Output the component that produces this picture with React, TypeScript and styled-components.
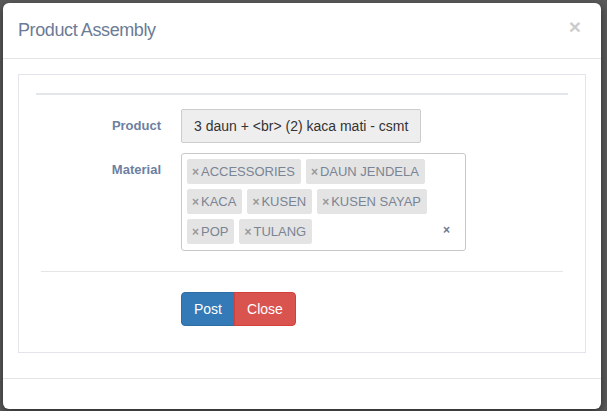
import React from "react";
import styled, { createGlobalStyle } from "styled-components";

const GlobalStyle = createGlobalStyle`
  html, body { margin: 0; padding: 0; }
  body {
    background: #5a5a5a;
    font-family: "Liberation Sans", Arial, sans-serif;
    font-size: 14px;
    color: #333;
    width: 607px;
    height: 411px;
    overflow: hidden;
  }
  * { box-sizing: border-box; }
`;

const Backdrop = styled.div`
  height: 411px;
  padding: 3px 6px 2px 3px;
`;

const Modal = styled.div`
  width: 598px;
  height: 406px;
  background: #fff;
  border-radius: 6px;
  box-shadow: 0 3px 9px rgba(0, 0, 0, 0.5);
  display: flex;
  flex-direction: column;
  overflow: hidden;
`;

const Header = styled.div`
  display: flex;
  align-items: flex-start;
  padding: 15px;
  border-bottom: 1px solid #e5e5e5;
`;

const Title = styled.h4`
  margin: 0;
  flex: 1;
  font-size: 18px;
  line-height: 25px;
  font-weight: normal;
  color: #6b7b96;
  letter-spacing: -0.4px;
`;

const CloseX = styled.button`
  border: 0;
  background: none;
  padding: 0;
  margin: -2px 5px 0 0;
  font-family: "Liberation Sans", Arial, sans-serif;
  font-size: 21px;
  line-height: 21px;
  font-weight: bold;
  color: #000;
  opacity: 0.2;
  cursor: pointer;
`;

const Body = styled.div`
  padding: 15px 15px 25px;
`;

const Panel = styled.div`
  border: 1px solid #e4e4ec;
  padding: 18px 17px 26px;
`;

const Rule = styled.div<{ $thick?: boolean; $inset?: number }>`
  height: ${(p) => (p.$thick ? 2 : 1)}px;
  background: ${(p) => (p.$thick ? "#e3e6ea" : "#e5e5e5")};
  margin: 0 ${(p) => p.$inset ?? 0}px;
`;

const Form = styled.div`
  display: grid;
  grid-template-columns: 125px 1fr;
  column-gap: 20px;
  row-gap: 10px;
  margin-top: 14px;
  margin-bottom: 20px;
`;

const Label = styled.div`
  text-align: right;
  padding-top: 7px;
  font-size: 13px;
  line-height: 20px;
  font-weight: bold;
  color: #6d7fa1;
`;

const StaticValue = styled.div`
  justify-self: start;
  padding: 6px 12px;
  line-height: 20px;
  font-size: 14px;
  color: #333;
  background: #eee;
  border: 1px solid #ccc;
  border-radius: 2px;
`;

const SelectBox = styled.div`
  width: 285px;
  border: 1px solid #c8c8c8;
  border-radius: 3px;
  padding: 5px 5px 6px 5px;
  display: flex;
  flex-wrap: wrap;
  align-items: center;
  gap: 5px;
`;

const Tag = styled.span`
  display: inline-flex;
  align-items: center;
  height: 25px;
  padding: 0 5px 0 4px;
  border: 1px solid #e4e4e4;
  background: #e4e4e4;
  border-radius: 2px;
  font-size: 13px;
  color: #7a8494;
  white-space: nowrap;
`;

const TagX = styled.span`
  width: 7px;
  margin-right: 2px;
  font-size: 12px;
  font-weight: bold;
  color: #999;
`;

const ClearX = styled.span`
  margin-left: auto;
  margin-right: 10px;
  margin-top: -3px;
  font-size: 12px;
  font-weight: bold;
  color: #6c7890;
`;

const Actions = styled.div`
  display: flex;
  margin: 20px 0 0 145px;
`;

const Btn = styled.button<{ $variant: "primary" | "danger" }>`
  font-family: "Liberation Sans", Arial, sans-serif;
  font-size: 14px;
  line-height: 20px;
  padding: 6px 12px;
  color: #fff;
  cursor: pointer;
  background: ${(p) => (p.$variant === "primary" ? "#337ab7" : "#d9534f")};
  border: 1px solid ${(p) => (p.$variant === "primary" ? "#2e6da4" : "#d43f3a")};
  border-radius: ${(p) => (p.$variant === "primary" ? "4px 0 0 4px" : "0 4px 4px 0")};
  margin-left: ${(p) => (p.$variant === "primary" ? 0 : -1)}px;
`;

const Footer = styled.div`
  flex: 1;
  border-top: 1px solid #e5e5e5;
`;

const materials = [
  "ACCESSORIES",
  "DAUN JENDELA",
  "KACA",
  "KUSEN",
  "KUSEN SAYAP",
  "POP",
  "TULANG",
];

export default function App() {
  return (
    <>
      <GlobalStyle />
      <Backdrop>
        <Modal>
          <Header>
            <Title>Product Assembly</Title>
            <CloseX aria-label="Close">×</CloseX>
          </Header>
          <Body>
            <Panel>
              <Rule $thick />
              <Form>
                <Label>Product</Label>
                <StaticValue>3 daun + &lt;br&gt; (2) kaca mati - csmt</StaticValue>
                <Label>Material</Label>
                <SelectBox>
                  {materials.map((m) => (
                    <Tag key={m}>
                      <TagX>×</TagX>
                      {m}
                    </Tag>
                  ))}
                  <ClearX>×</ClearX>
                </SelectBox>
              </Form>
              <Rule $inset={5} />
              <Actions>
                <Btn $variant="primary">Post</Btn>
                <Btn $variant="danger">Close</Btn>
              </Actions>
            </Panel>
          </Body>
          <Footer />
        </Modal>
      </Backdrop>
    </>
  );
}
